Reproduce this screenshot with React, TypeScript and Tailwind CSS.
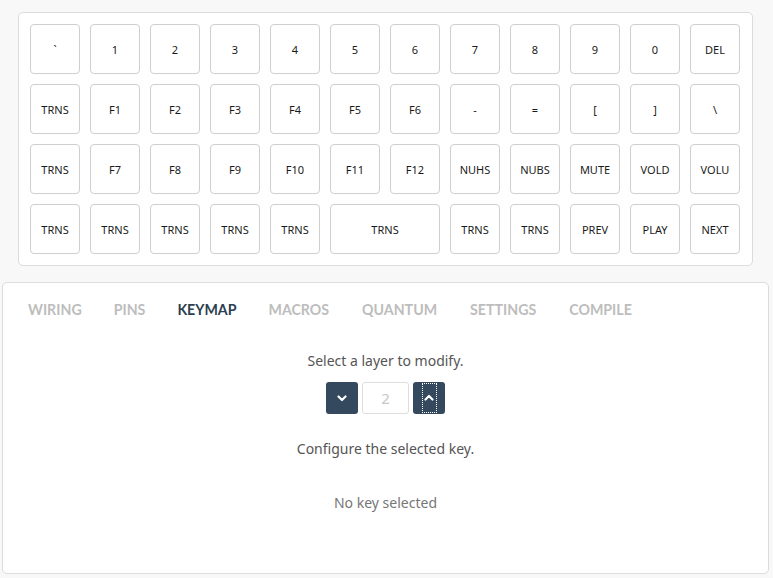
import React from "react";

const rows: { label: string; wide?: boolean }[][] = [
  ["`", "1", "2", "3", "4", "5", "6", "7", "8", "9", "0", "DEL"].map((l) => ({ label: l })),
  ["TRNS", "F1", "F2", "F3", "F4", "F5", "F6", "-", "=", "[", "]", "\\"].map((l) => ({ label: l })),
  ["TRNS", "F7", "F8", "F9", "F10", "F11", "F12", "NUHS", "NUBS", "MUTE", "VOLD", "VOLU"].map((l) => ({ label: l })),
  [
    { label: "TRNS" },
    { label: "TRNS" },
    { label: "TRNS" },
    { label: "TRNS" },
    { label: "TRNS" },
    { label: "TRNS", wide: true },
    { label: "TRNS" },
    { label: "TRNS" },
    { label: "PREV" },
    { label: "PLAY" },
    { label: "NEXT" },
  ],
];

const tabs = ["WIRING", "PINS", "KEYMAP", "MACROS", "QUANTUM", "SETTINGS", "COMPILE"];

function Chevron({ up }: { up?: boolean }) {
  return (
    <svg width="10" height="8" viewBox="0 0 10 8" fill="none">
      <path
        d={up ? "M1.5 5.5 L5 2 L8.5 5.5" : "M1.5 2.5 L5 6 L8.5 2.5"}
        stroke="white"
        strokeWidth="2.2"
        strokeLinecap="round"
        strokeLinejoin="round"
      />
    </svg>
  );
}

export default function App() {
  return (
    <div
      className="w-[773px] h-[578px] bg-[#f8f8f8] overflow-hidden flex flex-col"
      style={{ fontFamily: "'Noto Sans', 'Open Sans', sans-serif" }}
    >
      <div className="ml-[18px] mt-[12px] w-[735px] bg-white border border-[#dcdcdc] rounded-[5px] p-[11px] flex flex-col gap-[10px]">
        {rows.map((row, i) => (
          <div key={i} className="flex gap-[10px]">
            {row.map((k, j) => (
              <div
                key={j}
                className={`${k.wide ? "w-[110px]" : "w-[50px]"} h-[50px] pt-[2px] border border-[#cfcfcf] rounded-[4px] flex items-center justify-center text-[11px] text-[#1a1a1a] bg-white`}
              >
                {k.label}
              </div>
            ))}
          </div>
        ))}
      </div>

      <div className="ml-[2px] mt-[16px] w-[767px] h-[292px] bg-white border border-[#dcdcdc] rounded-[5px] flex flex-col items-center">
        <div
          className="self-stretch flex pl-[25px] pt-[17px] text-[14.2px] leading-[20px] font-bold"
          style={{ fontFamily: "Lato, sans-serif" }}
        >
          {tabs.map((t, i) => (
            <span
              key={t}
              className={`${i < 3 ? "mr-[32px]" : "mr-[33px]"} ${t === "KEYMAP" ? "text-[#2c3e50]" : "text-[#bdbdbd]"}`}
            >
              {t}
            </span>
          ))}
        </div>
        <div className="mt-[31px] text-[14px] text-[#555] leading-[20px]">Select a layer to modify.</div>
        <div className="mt-[11px] flex gap-[4px]">
          <button className="w-[32px] h-[32px] bg-[#34495e] rounded-[3px] flex items-center justify-center">
            <Chevron />
          </button>
          <div className="w-[47px] h-[32px] border border-[#dddddd] rounded-[3px] flex items-center justify-center text-[15px] text-[#c8c8c8]">
            2
          </div>
          <button className="w-[32px] h-[32px] bg-[#34495e] rounded-[3px] flex items-center justify-center">
            <div className="w-[15px] h-[30px] border border-dotted border-white flex items-center justify-center">
              <Chevron up />
            </div>
          </button>
        </div>
        <div className="mt-[25px] text-[14px] text-[#555] leading-[20px]">Configure the selected key.</div>
        <div className="mt-[34px] text-[14px] text-[#777] leading-[20px]">No key selected</div>
      </div>
    </div>
  );
}
